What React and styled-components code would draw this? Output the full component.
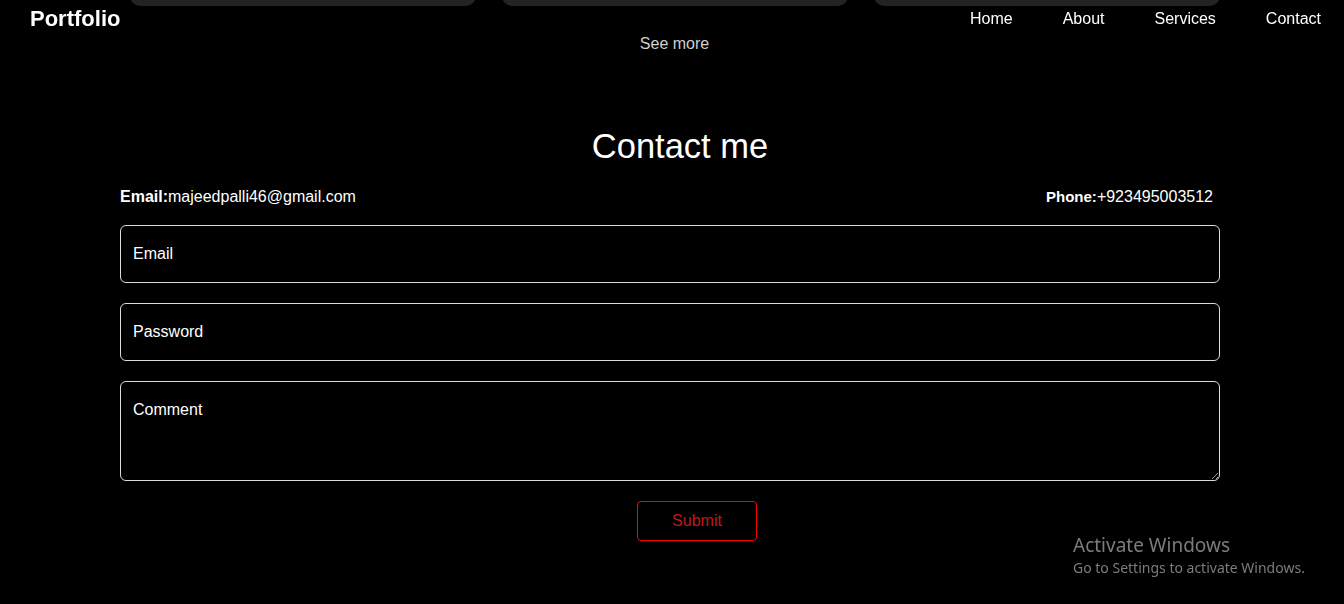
import React, { useState, useCallback } from "react";
import styled, { createGlobalStyle } from "styled-components";

const GlobalStyle = createGlobalStyle`
  html, body {
    margin: 0;
    padding: 0;
    background: #000;
    color: #fff;
    font-family: "Liberation Sans", Arial, sans-serif;
  }
  * {
    box-sizing: border-box;
  }
`;

const Page = styled.div`
  min-height: 604px;
  background: #000;
  overflow: hidden;
`;

const NavBar = styled.nav`
  position: fixed;
  top: 0;
  left: 0;
  right: 0;
  height: 37px;
  display: flex;
  align-items: center;
  justify-content: space-between;
  padding: 0 23px 0 30px;
  z-index: 10;
`;

const Brand = styled.div`
  font-size: 22px;
  font-weight: bold;
  line-height: 25px;
`;

const NavLinks = styled.ul`
  display: flex;
  gap: 50px;
  list-style: none;
  margin: 0;
  padding: 0;
`;

const NavLink = styled.li`
  font-size: 16px;
  line-height: 18px;
  color: #fff;
  cursor: pointer;
`;

const CardsRow = styled.div`
  display: grid;
  grid-template-columns: repeat(3, 346px);
  gap: 26px;
  margin: -34px 0 0 130px;
`;

const Card = styled.div`
  height: 40px;
  background: #232323;
  border-radius: 0 0 10px 10px;
`;

const SeeMore = styled.div`
  margin-top: 29px;
  padding-left: 5px;
  text-align: center;
  font-size: 16px;
  line-height: 18px;
  color: #cfcfcf;
  cursor: pointer;
`;

const Contact = styled.section`
  width: 1100px;
  margin: 74px 0 0 120px;
`;

const Title = styled.h2`
  margin: 0;
  padding-left: 20px;
  text-align: center;
  font-size: 34.5px;
  font-weight: normal;
  line-height: 39px;
`;

const InfoRow = styled.div`
  display: flex;
  justify-content: space-between;
  align-items: baseline;
  margin-top: 22px;
  padding-right: 7px;
  font-size: 16px;
  line-height: 18px;
`;

const InfoLabel = styled.b`
  font-size: ${({ small }) => (small ? "15px" : "16px")};
`;

const Form = styled.form`
  display: flex;
  flex-direction: column;
  gap: 20px;
  margin-top: 19px;
`;

const Field = styled.input`
  height: 58px;
  width: 100%;
  padding: 0 12px;
  background: #000;
  color: #fff;
  border: 1px solid #dcdcdc;
  border-radius: 6px;
  font-family: "Liberation Sans", Arial, sans-serif;
  font-size: 16px;
  outline: none;
  &::placeholder {
    color: #fff;
    opacity: 1;
  }
`;

const TextArea = styled.textarea`
  height: 100px;
  width: 100%;
  padding: 19px 12px;
  background: #000;
  color: #fff;
  border: 1px solid #dcdcdc;
  border-radius: 6px;
  font-family: "Liberation Sans", Arial, sans-serif;
  font-size: 16px;
  line-height: 18px;
  outline: none;
  &::placeholder {
    color: #fff;
    opacity: 1;
  }
`;

const ButtonRow = styled.div`
  display: flex;
  justify-content: center;
`;

const SubmitButton = styled.button`
  width: 120px;
  height: 40px;
  margin-left: 54px;
  background: transparent;
  border: 1px solid #f00;
  border-radius: 4px;
  color: #c4161c;
  font-family: "Liberation Sans", Arial, sans-serif;
  font-size: 16px;
  cursor: pointer;
`;

const Watermark = styled.div`
  position: fixed;
  left: 1073px;
  top: 533px;
  color: #7c7c7c;
  font-family: "Noto Sans", "Open Sans", sans-serif;
  pointer-events: none;
`;

const WatermarkTitle = styled.div`
  font-size: 19px;
  line-height: 25px;
`;

const WatermarkText = styled.div`
  font-size: 14px;
  line-height: 20px;
`;

const links = ["Home", "About", "Services", "Contact"];

const App = () => {
  const [form, setForm] = useState({ email: "", password: "", comment: "" });

  const onChange = useCallback(
    (event) => {
      setForm({ ...form, [event.target.name]: event.target.value });
    },
    [form]
  );

  return (
    <Page>
      <GlobalStyle />
      <NavBar>
        <Brand>Portfolio</Brand>
        <NavLinks>
          {links.map((link) => (
            <NavLink key={link}>{link}</NavLink>
          ))}
        </NavLinks>
      </NavBar>

      <CardsRow>
        <Card />
        <Card />
        <Card />
      </CardsRow>
      <SeeMore>See more</SeeMore>

      <Contact>
        <Title>Contact me</Title>
        <InfoRow>
          <span>
            <InfoLabel>Email:</InfoLabel>majeedpalli46@gmail.com
          </span>
          <span>
            <InfoLabel small>Phone:</InfoLabel>+923495003512
          </span>
        </InfoRow>
        <Form onSubmit={(e) => e.preventDefault()}>
          <Field
            type="email"
            name="email"
            placeholder="Email"
            value={form.email}
            onChange={onChange}
          />
          <Field
            type="password"
            name="password"
            placeholder="Password"
            value={form.password}
            onChange={onChange}
          />
          <TextArea
            name="comment"
            placeholder="Comment"
            value={form.comment}
            onChange={onChange}
          />
          <ButtonRow>
            <SubmitButton type="submit">Submit</SubmitButton>
          </ButtonRow>
        </Form>
      </Contact>

      <Watermark>
        <WatermarkTitle>Activate Windows</WatermarkTitle>
        <WatermarkText>Go to Settings to activate Windows.</WatermarkText>
      </Watermark>
    </Page>
  );
};

export default App;
